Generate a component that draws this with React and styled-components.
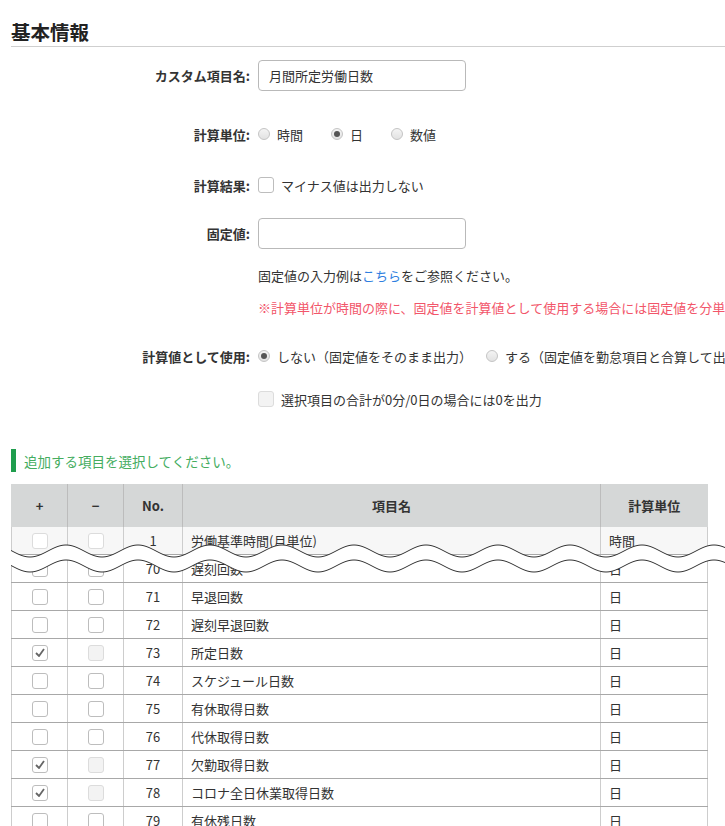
import React from "react";
import styled, { createGlobalStyle } from "styled-components";

const GlobalStyle = createGlobalStyle`
  html, body {
    margin: 0;
    padding: 0;
    background: #fff;
    overflow: hidden;
  }
  body {
    font-family: "Noto Sans CJK JP", "Noto Sans", sans-serif;
    font-size: 13px;
    color: #333;
  }
`;

const rows = [
  { no: 1, name: "労働基準時間(月単位)", unit: "時間", faded: true },
  { no: 70, name: "遅刻回数", unit: "日" },
  { no: 71, name: "早退回数", unit: "日" },
  { no: 72, name: "遅刻早退回数", unit: "日" },
  { no: 73, name: "所定日数", unit: "日", checked: true },
  { no: 74, name: "スケジュール日数", unit: "日" },
  { no: 75, name: "有休取得日数", unit: "日" },
  { no: 76, name: "代休取得日数", unit: "日" },
  { no: 77, name: "欠勤取得日数", unit: "日", checked: true },
  { no: 78, name: "コロナ全日休業取得日数", unit: "日", checked: true },
  { no: 79, name: "有休残日数", unit: "日" },
];

// sine line used for the "cut" mark over the table
const wave = (center, from, to, amp = 6, period = 72, peak = 55) => {
  const pts = [];
  for (let x = from; x <= to; x += 2) {
    const y = center - amp * Math.cos((2 * Math.PI * (x - peak)) / period);
    pts.push([x, +y.toFixed(2)]);
  }
  return pts;
};

const CheckMark = () => (
  <svg width="10" height="9" viewBox="0 0 10 9">
    <path d="M1 5 L4 8 L9 1" fill="none" stroke="#666" strokeWidth="1.8" />
  </svg>
);

const Radio = ({ checked, children }) => (
  <Option>
    <RadioDot checked={checked} />
    <span>{children}</span>
  </Option>
);

const Break = () => {
  const top = wave(11, 0, 716);
  const bottom = wave(26, 0, 716);
  const fill =
    top.map((p) => p.join(",")).join(" ") +
    " " +
    [...bottom].reverse().map((p) => p.join(",")).join(" ");
  return (
    <BreakSvg width="716" height="40" viewBox="0 0 716 40">
      <polygon points={fill} fill="#fff" />
      <polyline points={top.map((p) => p.join(",")).join(" ")} fill="none" stroke="#333" strokeWidth="1" />
      <polyline points={bottom.map((p) => p.join(",")).join(" ")} fill="none" stroke="#333" strokeWidth="1" />
    </BreakSvg>
  );
};

export default function App() {
  return (
    <Page>
      <GlobalStyle />
      <Heading>基本情報</Heading>

      <Form>
        <FormRow mt={13} h={31}>
          <Label>カスタム項目名:</Label>
          <TextInput defaultValue="月間所定労働日数" />
        </FormRow>

        <FormRow mt={28} h={30}>
          <Label>計算単位:</Label>
          <Options>
            <Radio>時間</Radio>
            <Radio checked>日</Radio>
            <Radio>数値</Radio>
          </Options>
        </FormRow>

        <FormRow mt={21} h={30}>
          <Label>計算結果:</Label>
          <Option>
            <Box />
            <span>マイナス値は出力しない</span>
          </Option>
        </FormRow>

        <FormRow mt={18} h={31}>
          <Label>固定値:</Label>
          <TextInput />
        </FormRow>

        <FormRow mt={16} h={20}>
          <span />
          <Note>
            固定値の入力例は<Link>こちら</Link>をご参照ください。
          </Note>
        </FormRow>

        <FormRow mt={12} h={20}>
          <span />
          <Warn>
            ※計算単位が時間の際に、固定値を計算値として使用する場合には固定値を分単位で入力してください。
          </Warn>
        </FormRow>

        <FormRow mt={24} h={30}>
          <Label>計算値として使用:</Label>
          <Options wide>
            <Radio checked>しない（固定値をそのまま出力）</Radio>
            <Radio>する（固定値を勤怠項目と合算して出力）</Radio>
          </Options>
        </FormRow>

        <FormRow mt={13} h={30}>
          <span />
          <Option>
            <Box disabled />
            <span>選択項目の合計が0分/0日の場合には0を出力</span>
          </Option>
        </FormRow>
      </Form>

      <SubTitle>追加する項目を選択してください。</SubTitle>

      <TableWrap>
        <Table>
          <colgroup>
            <col style={{ width: 56 }} />
            <col style={{ width: 56 }} />
            <col style={{ width: 59 }} />
            <col style={{ width: 418 }} />
            <col style={{ width: 107 }} />
          </colgroup>
          <thead>
            <tr>
              <Th>+</Th>
              <Th>−</Th>
              <Th>No.</Th>
              <Th>項目名</Th>
              <Th>計算単位</Th>
            </tr>
          </thead>
          <tbody>
            {rows.map((r) => (
              <Tr key={r.no} faded={r.faded}>
                <Td center>
                  <Box faded={r.faded}>{r.checked && <CheckMark />}</Box>
                </Td>
                <Td center>
                  <Box faded={r.faded} disabled={r.checked} />
                </Td>
                <Td center>{r.no}</Td>
                <Td>{r.name}</Td>
                <Td>{r.unit}</Td>
              </Tr>
            ))}
          </tbody>
        </Table>
        <Break />
      </TableWrap>
    </Page>
  );
}

const Page = styled.div`
  width: 725px;
  height: 826px;
  overflow: hidden;
  padding-left: 11px;
  box-sizing: border-box;
`;

const Heading = styled.h2`
  margin: 0;
  padding: 19px 0 1px;
  font-size: 19.5px;
  line-height: 26px;
  font-weight: bold;
  color: #222;
  border-bottom: 1px solid #cfcfcf;
`;

const Form = styled.div`
  display: flex;
  flex-direction: column;
`;

const FormRow = styled.div`
  display: grid;
  grid-template-columns: 239px 1fr;
  column-gap: 8px;
  align-items: center;
  margin-top: ${(p) => p.mt}px;
  height: ${(p) => p.h}px;
  white-space: nowrap;
`;

const Label = styled.div`
  text-align: right;
  font-weight: bold;
  color: #333;
`;

const TextInput = styled.input`
  box-sizing: border-box;
  width: 208px;
  height: 31px;
  border: 1px solid #b9b9b9;
  border-radius: 4px;
  padding: 0 10px;
  font: inherit;
  font-size: 13px;
  color: #333;
  outline: none;
`;

const Options = styled.div`
  display: flex;
  align-items: center;
  gap: ${(p) => (p.wide ? 14 : 28)}px;
`;

const Option = styled.label`
  display: flex;
  align-items: center;
  gap: 7px;
  color: #333;
`;

const RadioDot = styled.span`
  position: relative;
  width: 12px;
  height: 12px;
  box-sizing: border-box;
  border-radius: 50%;
  border: 1px solid #c4c4c4;
  background: linear-gradient(#f4f4f4, #e2e2e2);
  flex: none;
  &::after {
    content: "";
    display: ${(p) => (p.checked ? "block" : "none")};
    position: absolute;
    left: 2px;
    top: 2px;
    width: 6px;
    height: 6px;
    border-radius: 50%;
    background: #555;
  }
`;

const Box = styled.span`
  display: inline-flex;
  align-items: center;
  justify-content: center;
  width: 16px;
  height: 16px;
  box-sizing: border-box;
  border-radius: 3px;
  border: 1px solid ${(p) => (p.disabled || p.faded ? "#dcdcdc" : "#bdbdbd")};
  background: ${(p) => (p.disabled ? "#f3f3f3" : "#fff")};
  vertical-align: middle;
  flex: none;
`;

const Note = styled.div`
  color: #333;
`;

const Link = styled.span`
  color: #2f7fe0;
`;

const Warn = styled.div`
  color: #f2566a;
`;

const SubTitle = styled.div`
  margin-top: 35px;
  height: 23px;
  border-left: 5px solid #1f9d4d;
  padding-left: 8px;
  display: flex;
  align-items: center;
  font-size: 13.5px;
  color: #45ad5f;
`;

const TableWrap = styled.div`
  position: relative;
  margin-top: 12px;
`;

const Table = styled.table`
  width: 696px;
  table-layout: fixed;
  border-collapse: collapse;
`;

const Th = styled.th`
  height: 43px;
  padding: 0;
  background: #d5d7d7;
  border-left: 1px solid #bcbcbc;
  font-weight: bold;
  font-size: 13px;
  color: #333;
  text-align: center;
  &:first-child {
    border-left: 1px solid #d5d7d7;
  }
`;

const Tr = styled.tr`
  background: ${(p) => (p.faded ? "#f7f7f7" : "#fff")};
`;

const Td = styled.td`
  height: 27px;
  padding: 0 8px;
  border: 1px solid #cdcdcd;
  border-top: none;
  border-bottom: 1px solid #a8a8a8;
  text-align: ${(p) => (p.center ? "center" : "left")};
  color: #333;
  white-space: nowrap;
  line-height: 1;
`;

const BreakSvg = styled.svg`
  position: absolute;
  left: 0;
  top: 56px;
`;
